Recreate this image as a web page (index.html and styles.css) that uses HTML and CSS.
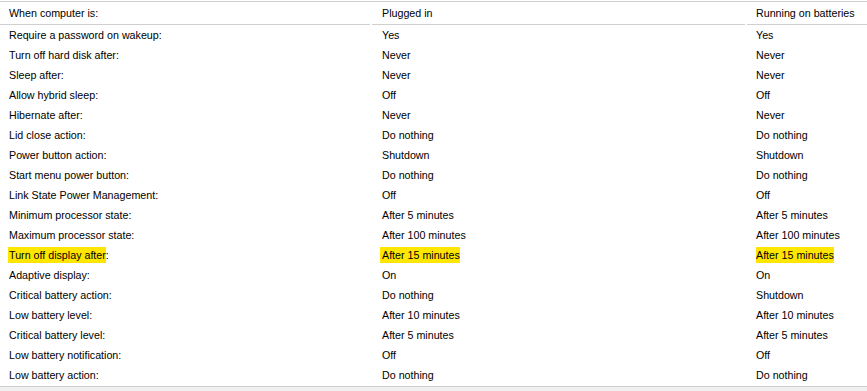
FILE: index.html
```html
<!DOCTYPE html>
<html>
<head>
<meta charset="utf-8">
<link rel="stylesheet" href="styles.css">
</head>
<body>
<div class="page">
  <div class="grid">
    <div class="head">When computer is:</div>
    <div class="head">Plugged in</div>
    <div class="head">Running on batteries</div>

    <div class="cell">Require a password on wakeup:</div><div class="cell">Yes</div><div class="cell">Yes</div>
    <div class="cell">Turn off hard disk after:</div><div class="cell">Never</div><div class="cell">Never</div>
    <div class="cell">Sleep after:</div><div class="cell">Never</div><div class="cell">Never</div>
    <div class="cell">Allow hybrid sleep:</div><div class="cell">Off</div><div class="cell">Off</div>
    <div class="cell">Hibernate after:</div><div class="cell">Never</div><div class="cell">Never</div>
    <div class="cell">Lid close action:</div><div class="cell">Do nothing</div><div class="cell">Do nothing</div>
    <div class="cell">Power button action:</div><div class="cell">Shutdown</div><div class="cell">Shutdown</div>
    <div class="cell">Start menu power button:</div><div class="cell">Do nothing</div><div class="cell">Do nothing</div>
    <div class="cell">Link State Power Management:</div><div class="cell">Off</div><div class="cell">Off</div>
    <div class="cell">Minimum processor state:</div><div class="cell">After 5 minutes</div><div class="cell">After 5 minutes</div>
    <div class="cell">Maximum processor state:</div><div class="cell">After 100 minutes</div><div class="cell">After 100 minutes</div>
    <div class="cell"><span class="hl hl-a">Turn off display after</span>:</div><div class="cell"><span class="hl hl-b">After 15 minutes</span></div><div class="cell"><span class="hl">After 15 minutes</span></div>
    <div class="cell">Adaptive display:</div><div class="cell">On</div><div class="cell">On</div>
    <div class="cell">Critical battery action:</div><div class="cell">Do nothing</div><div class="cell">Shutdown</div>
    <div class="cell">Low battery level:</div><div class="cell">After 10 minutes</div><div class="cell">After 10 minutes</div>
    <div class="cell">Critical battery level:</div><div class="cell">After 5 minutes</div><div class="cell">After 5 minutes</div>
    <div class="cell">Low battery notification:</div><div class="cell">Off</div><div class="cell">Off</div>
    <div class="cell">Low battery action:</div><div class="cell">Do nothing</div><div class="cell">Do nothing</div>
  </div>
  <div class="footer"></div>
</div>
</body>
</html>
```
FILE: styles.css
```css
html, body {
  margin: 0;
  padding: 0;
  background: #ffffff;
}
.page {
  width: 867px;
  height: 391px;
  display: flex;
  flex-direction: column;
  font-family: "Liberation Sans", Arial, sans-serif;
  font-size: 10.7px;
  color: #000000;
  overflow: hidden;
}
.grid {
  margin-top: 1px;
  border-top: 1px solid #d0d0d0;
  border-bottom: 1px solid #d0d0d0;
  display: grid;
  grid-template-columns: 370px 373px 1fr;
  grid-template-rows: 23px;
  column-gap: 2px;
  grid-auto-rows: 20px;
  padding-bottom: 1px;
}
.head {
  line-height: 22px;
  padding-left: 9px;
  border-bottom: 1px solid #d0d0d0;
  white-space: nowrap;
}
.grid > .head:nth-child(2) { padding-left: 10px; }
.grid > .head:nth-child(3) { padding-left: 9px; }
.cell {
  line-height: 20px;
  padding-left: 9px;
  white-space: nowrap;
}
.grid > .cell:nth-child(3n+2) { padding-left: 10px; }
.grid > .cell:nth-child(3n+3) { padding-left: 9px; }
.hl {
  background: #ffe600;
  padding: 2px 0;
}
.hl-a { margin-left: -1px; padding-left: 1px; }
.hl-b { margin-left: -2px; padding-left: 2px; }
.footer {
  flex: 1;
  background: #f0f0f0;
}
```
